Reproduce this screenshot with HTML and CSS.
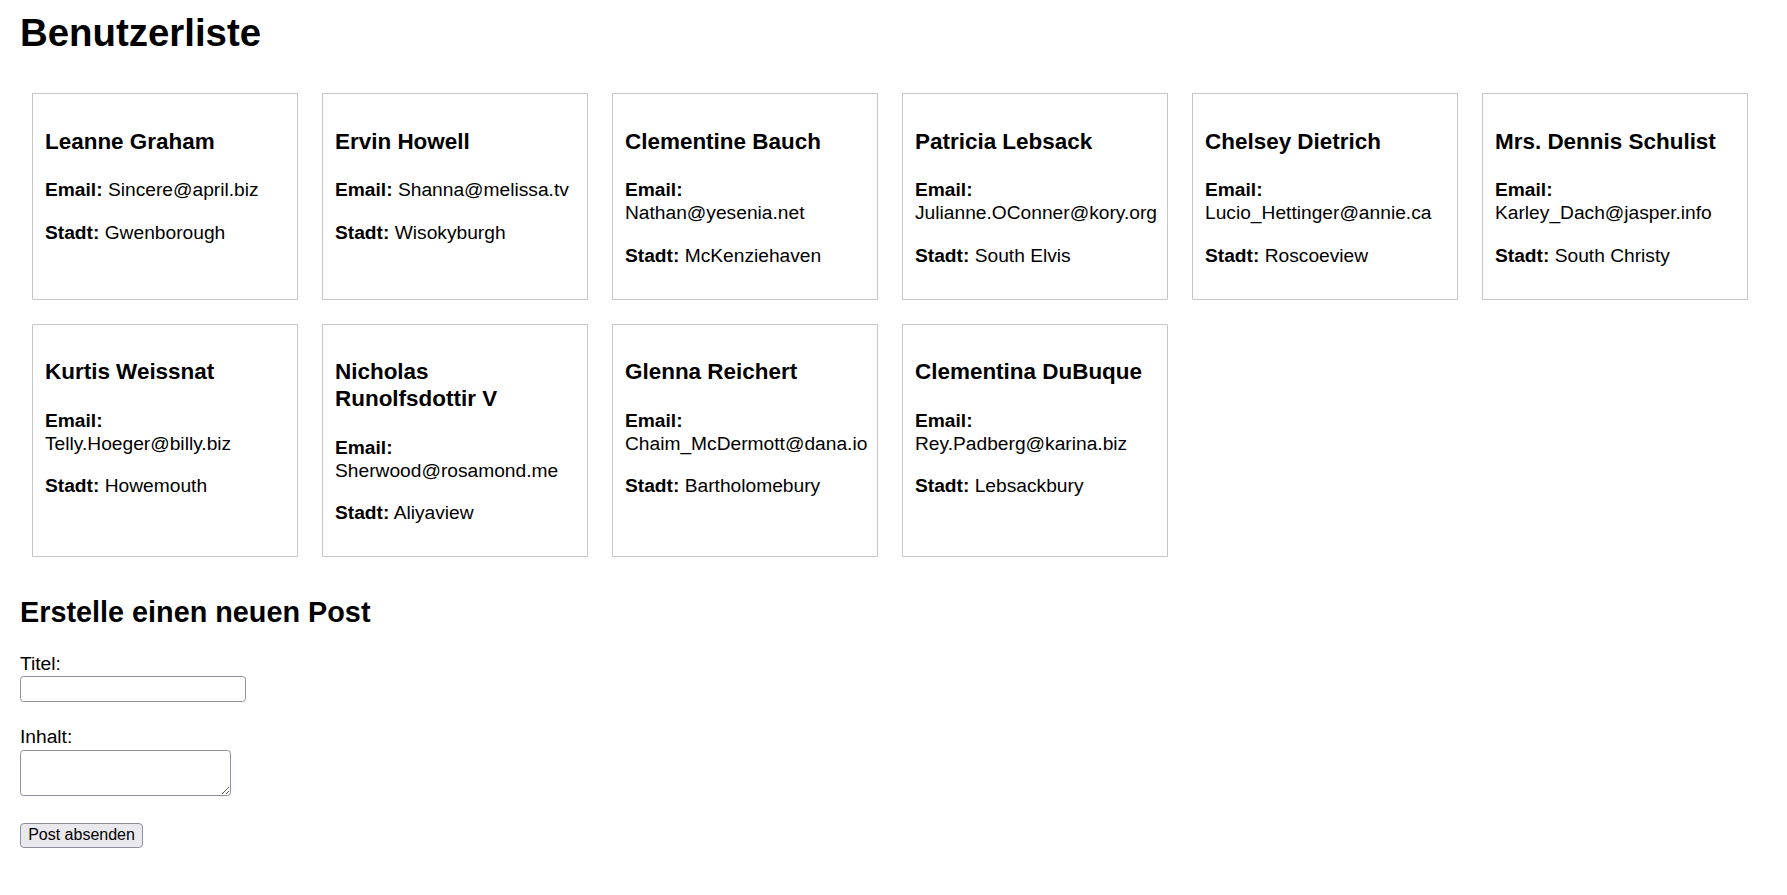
FILE: index.html
```html
<!DOCTYPE html>
<html lang="de">
<head>
<meta charset="utf-8">
<title>Benutzerliste</title>
<link rel="stylesheet" href="styles.css">
</head>
<body>
<h1 class="title">Benutzerliste</h1>
<div class="user-list">
  <div class="user-card">
    <h3 class="user-name">Leanne Graham</h3>
    <p class="user-line"><strong>Email:</strong> Sincere@april.biz</p>
    <p class="user-line"><strong>Stadt:</strong> Gwenborough</p>
  </div>
  <div class="user-card">
    <h3 class="user-name">Ervin Howell</h3>
    <p class="user-line"><strong>Email:</strong> Shanna@melissa.tv</p>
    <p class="user-line"><strong>Stadt:</strong> Wisokyburgh</p>
  </div>
  <div class="user-card">
    <h3 class="user-name">Clementine Bauch</h3>
    <p class="user-line"><strong>Email:</strong> Nathan@yesenia.net</p>
    <p class="user-line"><strong>Stadt:</strong> McKenziehaven</p>
  </div>
  <div class="user-card">
    <h3 class="user-name">Patricia Lebsack</h3>
    <p class="user-line"><strong>Email:</strong> Julianne.OConner@kory.org</p>
    <p class="user-line"><strong>Stadt:</strong> South Elvis</p>
  </div>
  <div class="user-card">
    <h3 class="user-name">Chelsey Dietrich</h3>
    <p class="user-line"><strong>Email:</strong> Lucio_Hettinger@annie.ca</p>
    <p class="user-line"><strong>Stadt:</strong> Roscoeview</p>
  </div>
  <div class="user-card">
    <h3 class="user-name">Mrs. Dennis Schulist</h3>
    <p class="user-line"><strong>Email:</strong> Karley_Dach@jasper.info</p>
    <p class="user-line"><strong>Stadt:</strong> South Christy</p>
  </div>
  <div class="user-card">
    <h3 class="user-name">Kurtis Weissnat</h3>
    <p class="user-line"><strong>Email:</strong> Telly.Hoeger@billy.biz</p>
    <p class="user-line"><strong>Stadt:</strong> Howemouth</p>
  </div>
  <div class="user-card">
    <h3 class="user-name">Nicholas Runolfsdottir V</h3>
    <p class="user-line"><strong>Email:</strong> Sherwood@rosamond.me</p>
    <p class="user-line"><strong>Stadt:</strong> Aliyaview</p>
  </div>
  <div class="user-card">
    <h3 class="user-name">Glenna Reichert</h3>
    <p class="user-line"><strong>Email:</strong> Chaim_McDermott@dana.io</p>
    <p class="user-line"><strong>Stadt:</strong> Bartholomebury</p>
  </div>
  <div class="user-card">
    <h3 class="user-name">Clementina DuBuque</h3>
    <p class="user-line"><strong>Email:</strong> Rey.Padberg@karina.biz</p>
    <p class="user-line"><strong>Stadt:</strong> Lebsackbury</p>
  </div>
</div>

<h2 class="form-title">Erstelle einen neuen Post</h2>
<form class="post-form">
  <div class="field field-title">
    <label class="field-label" for="title">Titel:</label>
    <input class="field-input" id="title" type="text">
  </div>
  <div class="field field-body">
    <label class="field-label" for="body">Inhalt:</label>
    <textarea class="field-textarea" id="body"></textarea>
  </div>
  <button class="submit-btn" type="submit">Post absenden</button>
</form>
</body>
</html>
```

FILE: styles.css
```css
html, body {
  background: #ffffff;
}

body {
  margin: 0;
  padding: 10px 20px 0 20px;
  font-family: "Liberation Sans", Arial, Helvetica, sans-serif;
  font-size: 19.2px;
  line-height: 1.2;
  color: #000000;
}

.title {
  font-size: 38.4px;
  font-weight: bold;
  margin: 0 0 25.4px 0;
}

.user-list {
  display: flex;
  flex-wrap: wrap;
  gap: 24px;
  padding: 12px;
}

.user-card {
  box-sizing: content-box;
  width: 240px;
  padding: 12px 12px 13px 12px;
  border: 1px solid #c8c8c8;
}

.user-name {
  font-size: 22.46px;
  font-weight: bold;
  margin: 22.46px 0;
}

.user-line {
  margin: 19.2px 0;
}

.form-title {
  font-size: 28.8px;
  font-weight: bold;
  margin: 26px 0 22px 0;
}

.post-form {
  display: flex;
  flex-direction: column;
  align-items: flex-start;
}

.field {
  display: flex;
  flex-direction: column;
  align-items: flex-start;
}

.field-title {
  margin-bottom: 23px;
}

.field-body {
  margin-bottom: 26.5px;
}

.field-label {
  line-height: 1.2;
}

.field-input {
  box-sizing: border-box;
  margin: 1.5px 0 0 0;
  width: 225.5px;
  height: 25.5px;
  border: 1px solid #8f8f9d;
  border-radius: 3.5px;
  background: #ffffff;
  padding: 1px 2px;
  font-family: "Liberation Sans", Arial, sans-serif;
  font-size: 16px;
}

.field-textarea {
  box-sizing: border-box;
  margin: 2.5px 0 0 0;
  width: 211.4px;
  height: 46px;
  border: 1px solid #8f8f9d;
  border-radius: 3.5px;
  background: #ffffff;
  padding: 2px;
  font-family: "Liberation Mono", monospace;
  font-size: 16px;
}

.submit-btn {
  box-sizing: border-box;
  width: 123px;
  height: 25.4px;
  padding: 0 7px;
  background: #e9e9ed;
  border: 1px solid #8f8f9d;
  border-radius: 4px;
  color: #000000;
  font-family: "Liberation Sans", Arial, sans-serif;
  font-size: 16px;
  line-height: 18px;
}
```
